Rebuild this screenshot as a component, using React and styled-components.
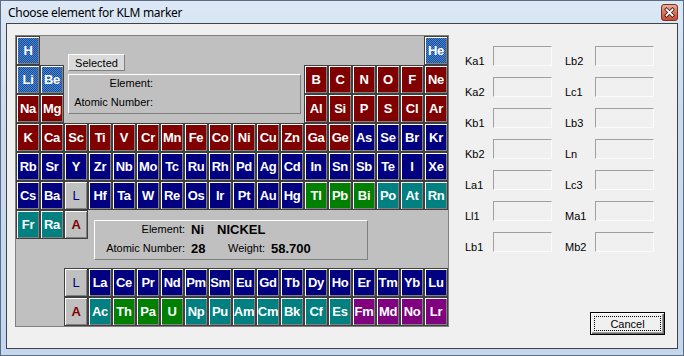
import React from 'react'
import styled, {createGlobalStyle} from 'styled-components'

const GlobalStyle = createGlobalStyle`
    html, body {
        margin: 0;
        padding: 0;
        background: #fff;
    }
    body {
        font-family: 'Liberation Sans', Arial, sans-serif;
    }
`

const fills = {
    sel: 'repeating-conic-gradient(#164c9a 0 25%, #4d86cc 0 50%) 0 0 / 2px 2px',
    red: '#800000',
    navy: '#000080',
    green: '#008000',
    teal: '#008080',
    purple: '#800080',
    lan: '#c0c0c0',
    act: '#c0c0c0',
}

const inks = {
    lan: '#000080',
    act: '#800000',
}

const Window = styled.div`
    width: 684px;
    height: 356px;
    box-sizing: border-box;
    border: 1px solid #5c6d84;
    background: linear-gradient(180deg, #dce8f5 0%, #cbdcf0 30%, #c4d7ee 100%);
    display: flex;
    flex-direction: column;
    padding: 0 5px 6px;
`

const TitleBar = styled.div`
    height: 22px;
    flex: none;
    display: flex;
    align-items: flex-start;
    justify-content: space-between;
    padding-left: 2px;
`

const Title = styled.span`
    font-family: 'Noto Sans', sans-serif;
    font-size: 12px;
    letter-spacing: -0.3px;
    line-height: 23px;
    color: #000;
`

const CloseBox = styled.div`
    width: 17px;
    height: 17px;
    margin-top: 3px;
    display: flex;
`

const Client = styled.div`
    flex: 1;
    display: flex;
    gap: 16px;
    padding: 11px 12px 13px 8px;
    border: 1px solid #434343;
    background: #f0f0f0;
`

const Table = styled.div`
    display: grid;
    grid-template-columns: repeat(18, 24px);
    grid-template-rows: repeat(10, 29px);
    align-self: flex-start;
    border: 1px solid #808080;
    background: #c0c0c0;
`

const Cell = styled.div`
    grid-column: ${p => p.$col};
    grid-row: ${p => p.$row};
    box-sizing: border-box;
    border: 1px solid #404040;
    box-shadow: inset 1px 1px 0 #fff, inset -1px -1px 0 #808080;
    background: ${p => fills[p.$kind]};
    color: ${p => inks[p.$kind] || '#fff'};
    font-family: 'Liberation Sans', Arial, sans-serif;
    font-size: 13px;
    font-weight: ${p => (p.$kind === 'lan' ? 400 : 700)};
    letter-spacing: -0.3px;
    display: flex;
    align-items: center;
    justify-content: center;
`

const Area = styled.div`
    grid-column: ${p => p.$cols};
    grid-row: ${p => p.$rows};
    display: flex;
    flex-direction: column;
    align-items: flex-start;
    padding: ${p => p.$pad};
`

const Tag = styled.div`
    width: 57px;
    height: 17px;
    box-sizing: border-box;
    border: 1px solid;
    border-color: #fff #808080 #808080 #fff;
    background: #dadada;
    font-size: 11px;
    display: flex;
    align-items: center;
    justify-content: center;
    margin-bottom: 3px;
`

const InfoBox = styled.div`
    width: ${p => p.$w}px;
    height: 40px;
    box-sizing: border-box;
    border: 1px solid;
    border-color: #fff #808080 #808080 #fff;
    display: flex;
    flex-direction: column;
    gap: 5px;
    padding-top: 1px;
`

const InfoRow = styled.div`
    display: flex;
    align-items: center;
    height: 14px;
`

const Key = styled.span`
    width: ${p => p.$w}px;
    text-align: ${p => p.$align || 'right'};
    font-size: 11px;
    color: #000;
    flex: none;
`

const Value = styled.span`
    width: ${p => (p.$w ? p.$w + 'px' : 'auto')};
    margin-left: ${p => p.$gap || 0}px;
    font-size: 13px;
    font-weight: 700;
    color: #000;
    flex: none;
`

const Side = styled.div`
    width: 200px;
    display: flex;
    flex-direction: column;
`

const Lines = styled.div`
    display: grid;
    grid-template-columns: 87px 89px;
    column-gap: 13px;
    row-gap: 11px;
    margin-top: 11px;
`

const Pair = styled.div`
    display: flex;
    height: 20px;
`

const LineLabel = styled.span`
    width: ${p => p.$w}px;
    padding-top: 9px;
    font-size: 11px;
    line-height: 13px;
    color: #000;
`

const Field = styled.div`
    width: 59px;
    height: 20px;
    box-sizing: border-box;
    border: 1px solid;
    border-color: #a0a0a0 #fbfbfb #fbfbfb #a0a0a0;
    background: #f0f0f0;
`

const Button = styled.button`
    margin-top: auto;
    align-self: flex-end;
    position: relative;
    width: 75px;
    height: 23px;
    box-sizing: border-box;
    padding: 0;
    border: 1px solid #000;
    background: #f0f0f0;
    box-shadow: inset 1px 1px 0 #fff, inset -1px -1px 0 #696969, inset -2px -2px 0 #a0a0a0;
    font-family: 'Liberation Sans', Arial, sans-serif;
    font-size: 11px;
    color: #000;

    &::after {
        content: '';
        position: absolute;
        inset: 3px;
        border: 1px dotted #000;
    }
`

// [symbol, column, row, kind]
const elements = []
const put = (list, row, start, kind) =>
    list.split(' ').forEach((s, i) => elements.push([s, start + i, row, typeof kind === 'function' ? kind(i) : kind]))

put('H', 1, 1, 'sel')
put('He', 1, 18, 'sel')
put('Li Be', 2, 1, 'sel')
put('B C N O F Ne', 2, 13, 'red')
put('Na Mg', 3, 1, 'red')
put('Al Si P S Cl Ar', 3, 13, 'red')
put('K Ca Sc Ti V Cr Mn Fe Co Ni Cu Zn Ga Ge As Se Br Kr', 4, 1, i => (i < 14 ? 'red' : 'navy'))
put('Rb Sr Y Zr Nb Mo Tc Ru Rh Pd Ag Cd In Sn Sb Te I Xe', 5, 1, 'navy')
put('Cs Ba', 6, 1, 'navy')
put('L', 6, 3, 'lan')
put('Hf Ta W Re Os Ir Pt Au Hg', 6, 4, 'navy')
put('Tl Pb Bi', 6, 13, 'green')
put('Po At Rn', 6, 16, 'teal')
put('Fr Ra', 7, 1, 'teal')
put('A', 7, 3, 'act')
put('L', 9, 3, 'lan')
put('La Ce Pr Nd Pm Sm Eu Gd Tb Dy Ho Er Tm Yb Lu', 9, 4, 'navy')
put('A', 10, 3, 'act')
put('Ac', 10, 4, 'teal')
put('Th Pa U', 10, 5, 'green')
put('Np Pu Am Cm Bk Cf Es', 10, 8, 'teal')
put('Fm Md No Lr', 10, 15, 'purple')

const left = ['Ka1', 'Ka2', 'Kb1', 'Kb2', 'La1', 'Ll1', 'Lb1']
const right = ['Lb2', 'Lc1', 'Lb3', 'Ln', 'Lc3', 'Ma1', 'Mb2']

const CloseIcon = () => (
    <svg width="17" height="17" viewBox="0 0 17 17">
        <defs>
            <linearGradient id="cg" x1="0" y1="0" x2="0" y2="1">
                <stop offset="0" stopColor="#eab3a2" />
                <stop offset="0.5" stopColor="#d6735c" />
                <stop offset="1" stopColor="#c24a32" />
            </linearGradient>
        </defs>
        <rect x="0.5" y="0.5" width="16" height="16" rx="2.5" fill="url(#cg)" stroke="#7d2f22" />
        <path d="M5.5 5.5 L11.5 11.5 M11.5 5.5 L5.5 11.5" stroke="#4a1a12" strokeWidth="3.4" strokeLinecap="square" />
        <path d="M5.5 5.5 L11.5 11.5 M11.5 5.5 L5.5 11.5" stroke="#fff" strokeWidth="1.8" strokeLinecap="square" />
    </svg>
)

export default function App() {
    return (
        <>
            <GlobalStyle />
            <Window>
                <TitleBar>
                    <Title>Choose element for KLM marker</Title>
                    <CloseBox>
                        <CloseIcon />
                    </CloseBox>
                </TitleBar>
                <Client>
                    <Table>
                        {elements.map(([s, c, r, k]) => (
                            <Cell key={s + c + r} $col={c} $row={r} $kind={k}>
                                {s}
                            </Cell>
                        ))}
                        <Area $cols="3 / 13" $rows="1 / 4" $pad="18px 0 0 4px">
                            <Tag>Selected</Tag>
                            <InfoBox $w={233}>
                                <InfoRow>
                                    <Key $w={84}>Element:</Key>
                                </InfoRow>
                                <InfoRow>
                                    <Key $w={84}>Atomic Number:</Key>
                                </InfoRow>
                            </InfoBox>
                        </Area>
                        <Area $cols="4 / 16" $rows="7 / 9" $pad="10px 0 0 6px">
                            <InfoBox $w={274}>
                                <InfoRow>
                                    <Key $w={90}>Element:</Key>
                                    <Value $w={26} $gap={6}>Ni</Value>
                                    <Value>NICKEL</Value>
                                </InfoRow>
                                <InfoRow>
                                    <Key $w={90}>Atomic Number:</Key>
                                    <Value $w={37} $gap={6}>28</Value>
                                    <Key $w={43} $align="left">Weight:</Key>
                                    <Value>58.700</Value>
                                </InfoRow>
                            </InfoBox>
                        </Area>
                    </Table>
                    <Side>
                        <Lines>
                            {left.map((l, i) => (
                                <React.Fragment key={l}>
                                    <Pair>
                                        <LineLabel $w={28}>{l}</LineLabel>
                                        <Field />
                                    </Pair>
                                    <Pair>
                                        <LineLabel $w={30}>{right[i]}</LineLabel>
                                        <Field />
                                    </Pair>
                                </React.Fragment>
                            ))}
                        </Lines>
                        <Button>Cancel</Button>
                    </Side>
                </Client>
            </Window>
        </>
    )
}
